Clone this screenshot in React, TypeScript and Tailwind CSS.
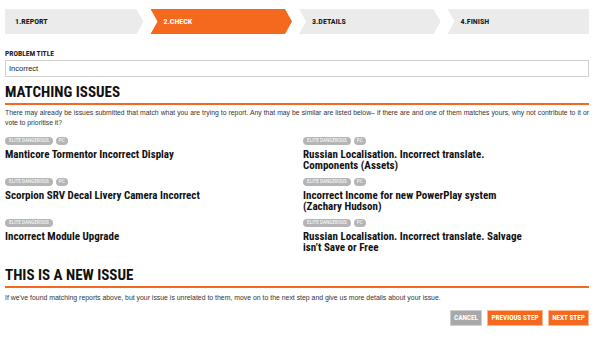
const steps = ['1.REPORT', '2.CHECK', '3.DETAILS', '4.FINISH'];

const clips = [
  '[clip-path:polygon(0_0,calc(100%-7px)_0,100%_50%,calc(100%-7px)_100%,0_100%)]',
  '[clip-path:polygon(0_0,calc(100%-7px)_0,100%_50%,calc(100%-7px)_100%,0_100%,7px_50%)]',
  '[clip-path:polygon(0_0,calc(100%-7px)_0,100%_50%,calc(100%-7px)_100%,0_100%,7px_50%)]',
  '[clip-path:polygon(0_0,100%_0,100%_100%,0_100%,7px_50%)]',
];

const issues = [
  { title: 'Manticore Tormentor Incorrect Display', pc: true },
  { title: 'Russian Localisation. Incorrect translate. Components (Assets)', pc: true },
  { title: 'Scorpion SRV Decal Livery Camera Incorrect', pc: true },
  { title: 'Incorrect Income for new PowerPlay system (Zachary Hudson)', pc: true },
  { title: 'Incorrect Module Upgrade', pc: false },
  { title: 'Russian Localisation. Incorrect translate. Salvage isn\u2019t Save or Free', pc: true },
];

const narrow = "font-['Roboto_Condensed',Roboto,sans-serif] [font-stretch:condensed]";
const body = "font-['Liberation_Sans',Arial,sans-serif]";

export default function App() {
  return (
    <div className={`min-h-[339px] w-[600px] bg-white pt-[9px] pr-[11px] pl-[5px] text-[#333] ${body}`}>
      <div className="flex gap-[7px]">
        {steps.map((s, i) => (
          <div
            key={s}
            className={`flex h-[25px] flex-1 items-center ${clips[i]} ${i === 0 ? 'pl-[10px]' : 'pl-[13px]'} ${
              i === 1 ? 'bg-[#f4691e] text-white' : 'bg-[#ebebeb] text-[#1a1a1a]'
            } ${narrow} text-[8px] font-bold`}
          >
            {s}
          </div>
        ))}
      </div>

      <div className={`mt-[16px] text-[7.5px] leading-[8px] font-bold text-[#222] ${narrow}`}>PROBLEM TITLE</div>
      <div className="mt-[2px] flex h-[17px] items-center border border-[#d0d0d0] px-[3px] text-[7.5px] text-[#222]">
        Incorrect
      </div>

      <h2 className={`mt-[8px] border-b-2 border-[#f4691e] pb-[3px] text-[15px] leading-[15px] font-bold text-[#111] ${narrow}`}>
        MATCHING ISSUES
      </h2>
      <p className="mt-[3px] text-[6.8px] leading-[10px]">
        <span className="block [text-align-last:justify]">
          There may already be issues submitted that match what you are trying to report. Any that may be similar are
          listed below– if there are and one of them matches yours, why not contribute to it or
        </span>
        <span className="block">vote to prioritise it?</span>
      </p>

      <div className="mt-[9px] grid grid-cols-2 gap-x-[12px] gap-y-[7px]">
        {issues.map((it) => (
          <div key={it.title}>
            <div className={`flex gap-[3px] ${narrow}`}>
              <span className="flex h-[8px] items-center rounded-full bg-[#b5b5b5] px-[4px] text-[5.3px] leading-none text-white">
                ELITE DANGEROUS
              </span>
              {it.pc && (
                <span className="flex h-[8px] items-center rounded-full bg-[#b5b5b5] px-[3px] text-[5.3px] leading-none text-white">
                  PC
                </span>
              )}
            </div>
            <div className={`mt-[4px] max-w-[226px] text-[11px] leading-[11px] font-bold text-[#111] ${narrow}`}>
              {it.title}
            </div>
          </div>
        ))}
      </div>

      <h2 className={`mt-[15px] border-b-2 border-[#f4691e] pb-[3px] text-[15px] leading-[15px] font-bold text-[#111] ${narrow}`}>
        THIS IS A NEW ISSUE
      </h2>
      <p className="mt-[5px] text-[6.9px] leading-[10px]">
        If we've found matching reports above, but your issue is unrelated to them, move on to the next step and give
        us more details about your issue.
      </p>

      <div className={`mt-[7px] flex justify-end gap-[5px] ${narrow} text-[7.2px] font-bold whitespace-nowrap text-white`}>
        <button className="h-[16px] w-[32px] border border-[#cfcfcf] bg-[#a8a8a8]">CANCEL</button>
        <button className="h-[16px] w-[56px] border border-[#fbb58f] bg-[#f4691e]">PREVIOUS STEP</button>
        <button className="h-[16px] w-[41px] border border-[#fbb58f] bg-[#f4691e]">NEXT STEP</button>
      </div>
    </div>
  );
}
